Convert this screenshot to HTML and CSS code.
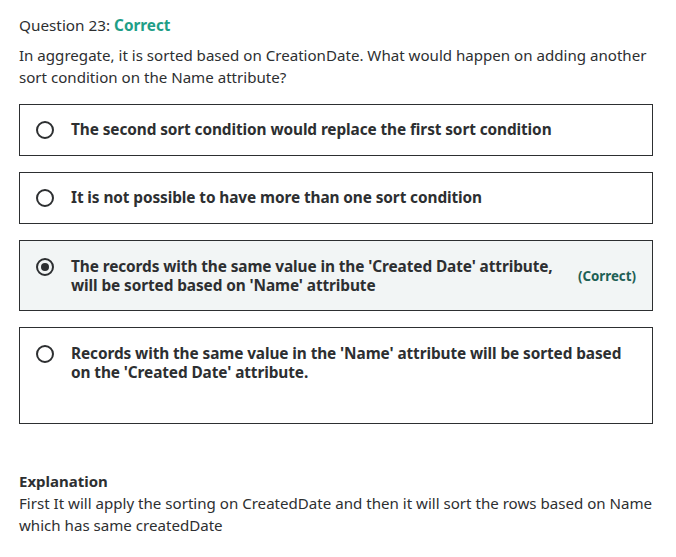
FILE: index.html
```html
<!DOCTYPE html>
<html>
<head>
<meta charset="utf-8">
<link rel="stylesheet" href="styles.css">
</head>
<body>
<div class="page">
  <div class="q-title">Question 23: <span class="status">Correct</span></div>
  <p class="q-text">In aggregate, it is sorted based on CreationDate. What would happen on adding another sort condition on the Name attribute?</p>
  <ul class="answers">
    <li class="answer">
      <span class="radio"></span>
      <span class="a-text">The second sort condition would replace the first sort condition</span>
    </li>
    <li class="answer">
      <span class="radio"></span>
      <span class="a-text">It is not possible to have more than one sort condition</span>
    </li>
    <li class="answer selected">
      <span class="radio checked"></span>
      <span class="a-text">The records with the same value in the 'Created Date' attribute, will be sorted based on 'Name' attribute</span>
      <span class="tag">(Correct)</span>
    </li>
    <li class="answer tall">
      <span class="radio"></span>
      <span class="a-text">Records with the same value in the 'Name' attribute will be sorted based on the 'Created Date' attribute.</span>
    </li>
  </ul>
  <div class="explanation">
    <div class="ex-title">Explanation</div>
    <p class="ex-text">First It will apply the sorting on CreatedDate and then it will sort the rows based on Name which has same createdDate</p>
  </div>
</div>
</body>
</html>
```

FILE: styles.css
```css
* { box-sizing: border-box; }
body {
  margin: 0;
  background: #fff;
  font-family: "Noto Sans", "Open Sans", sans-serif;
  color: #2d2f31;
}
.page {
  padding: 14px 23px 0 19px;
}
.q-title {
  font-size: 15.3px;
  line-height: 22px;
}
.status {
  color: #1e9e87;
  font-weight: 700;
}
.q-text {
  margin: 8px 0 0;
  font-size: 15.1px;
  line-height: 22px;
}
.answers {
  list-style: none;
  margin: 16px 0 0;
  padding: 0;
  display: flex;
  flex-direction: column;
  gap: 16px;
}
.answer {
  display: flex;
  align-items: flex-start;
  border: 1px solid #2d2f31;
  padding: 15px 16px 15px 16px;
  min-height: 52px;
}
.answer.selected {
  background: #f2f5f5;
  align-items: center;
  padding-top: 16px;
  padding-bottom: 15px;
}
.answer.selected .radio { align-self: flex-start; margin-top: 1px; }
.answer.tall {
  padding-top: 16px;
  padding-bottom: 41px;
}
.radio {
  flex: none;
  width: 18px;
  height: 18px;
  border: 2px solid #2d2f31;
  border-radius: 50%;
  margin: 1px 17px 0 0;
  display: flex;
  align-items: center;
  justify-content: center;
}
.radio.checked::after {
  content: "";
  width: 8px;
  height: 8px;
  border-radius: 50%;
  background: #2d2f31;
}
.a-text {
  flex: 1;
  font-size: 15.4px;
  line-height: 19px;
  font-weight: 700;
  letter-spacing: -0.1px;
}
.tag {
  flex: none;
  font-size: 13.3px;
  font-weight: 700;
  color: #1e6055;
  margin-left: 24px;
  margin-right: 0;
}
.explanation {
  margin-top: 46px;
}
.ex-title {
  font-size: 15px;
  font-weight: 700;
  line-height: 22px;
}
.ex-text {
  margin: 0;
  font-size: 15.1px;
  line-height: 22px;
}
```
